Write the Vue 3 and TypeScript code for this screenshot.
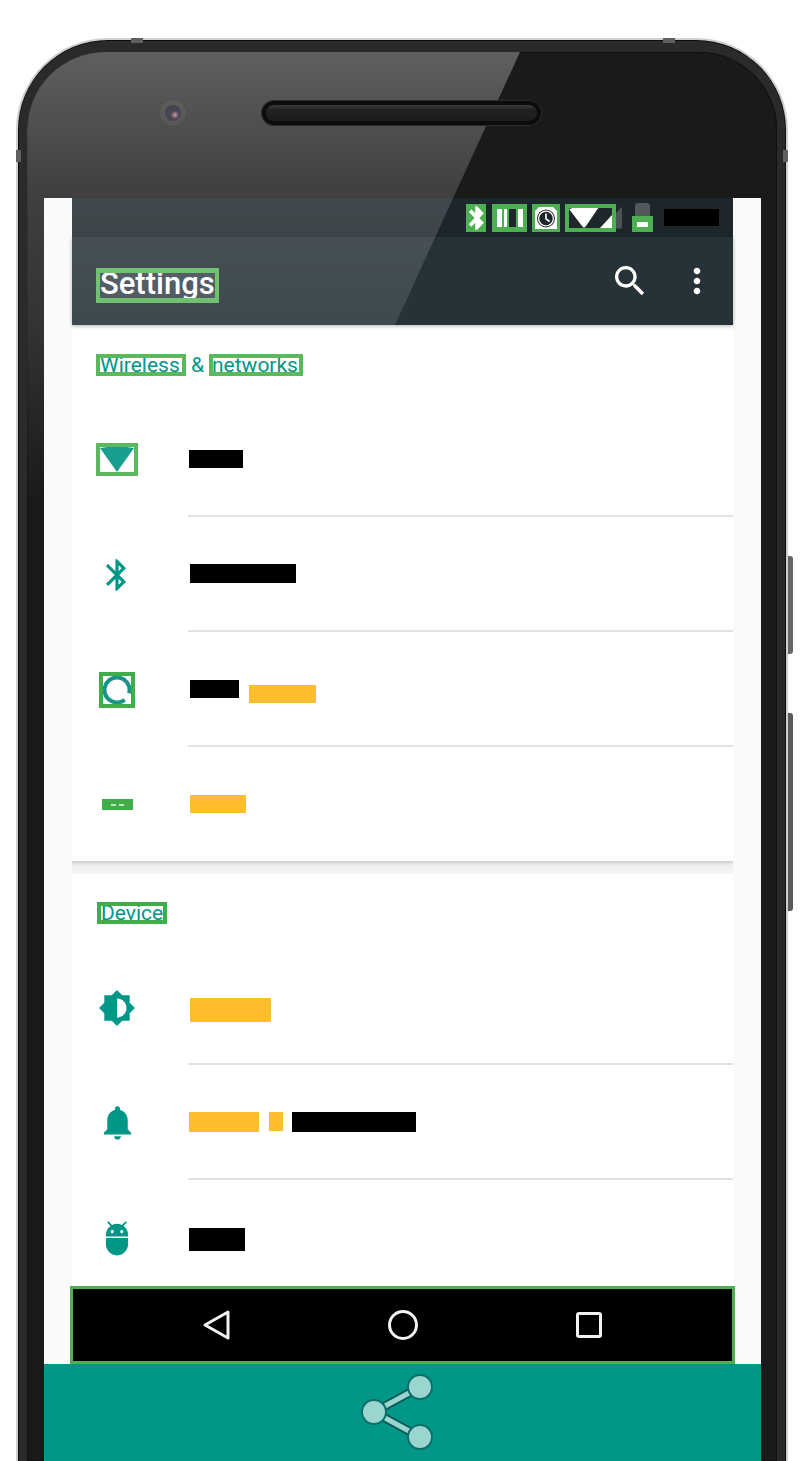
<script setup lang="ts">
interface Block {
  width: number
  height: number
  color: 'black' | 'yellow'
  gap?: number
  shift?: number
}

interface Row {
  id: string
  icon: string
  blocks: Block[]
}

const paths: Record<string, string> = {
  bluetooth: 'M17.71 7.71L12 2h-1v7.59L6.41 5 5 6.41 10.59 12 5 17.59 6.41 19 11 14.41V22h1l5.71-5.71-4.3-4.29 4.3-4.29zM13 5.83l1.88 1.88L13 9.59V5.83zm1.88 10.46L13 18.17v-3.76l1.88 1.88z',
  brightness: 'M20 15.31L23.31 12 20 8.69V4h-4.69L12 .69 8.69 4H4v4.69L.69 12 4 15.31V20h4.69L12 23.31 15.31 20H20v-4.69zM12 18V6c3.31 0 6 2.69 6 6s-2.69 6-6 6z',
  bell: 'M12 22c1.1 0 2-.9 2-2h-4c0 1.1.89 2 2 2zm6-6v-5c0-3.07-1.64-5.64-4.5-6.32V4c0-.83-.67-1.5-1.5-1.5s-1.5.67-1.5 1.5v.68C7.63 5.36 6 7.92 6 11v5l-2 2v1h16v-1l-2-2z',
  adb: 'M5 16c0 3.87 3.13 7 7 7s7-3.13 7-7v-4H5v4zM16.12 4.37l2.1-2.1-.82-.83-2.3 2.31C14.16 3.28 13.12 3 12 3s-2.16.28-3.09.75L6.6 1.44l-.82.83 2.1 2.1C6.14 5.64 5 7.68 5 10v1h14v-1c0-2.32-1.14-4.36-2.88-5.63zM9 9c-.55 0-1-.45-1-1s.45-1 1-1 1 .45 1 1-.45 1-1 1zm6 0c-.55 0-1-.45-1-1s.45-1 1-1 1 .45 1 1-.45 1-1 1z'
}

const searchPath = 'M15.5 14h-.79l-.28-.27C15.41 12.59 16 11.11 16 9.5 16 5.91 13.09 3 9.5 3S3 5.91 3 9.5 5.91 16 9.5 16c1.61 0 3.09-.59 4.23-1.57l.27.28v.79l5 4.99L20.49 19l-4.99-5zm-6 0C7.01 14 5 11.99 5 9.5S7.01 5 9.5 5 14 7.01 14 9.5 11.99 14 9.5 14z'
const morePath = 'M12 8c1.1 0 2-.9 2-2s-.9-2-2-2-2 .9-2 2 .9 2 2 2zm0 2c-1.1 0-2 .9-2 2s.9 2 2 2 2-.9 2-2-.9-2-2-2zm0 6c-1.1 0-2 .9-2 2s.9 2 2 2 2-.9 2-2-.9-2-2-2z'

const wirelessRows: Row[] = [
  { id: 'wifi', icon: 'wifi', blocks: [{ width: 54, height: 18, color: 'black' }] },
  { id: 'bt', icon: 'bluetooth', blocks: [{ width: 106, height: 19, color: 'black', gap: 1 }] },
  {
    id: 'data',
    icon: 'data',
    blocks: [
      { width: 49, height: 18, color: 'black', gap: 1, shift: 1 },
      { width: 67, height: 18, color: 'yellow', gap: 10, shift: 11 }
    ]
  },
  { id: 'more', icon: 'more', blocks: [{ width: 56, height: 18, color: 'yellow', gap: 1, shift: -1 }] }
]

const deviceRows: Row[] = [
  { id: 'display', icon: 'brightness', blocks: [{ width: 81, height: 24, color: 'yellow', gap: 1, shift: 6 }] },
  {
    id: 'sound',
    icon: 'bell',
    blocks: [
      { width: 70, height: 20, color: 'yellow' },
      { width: 14, height: 19, color: 'yellow', gap: 10 },
      { width: 124, height: 20, color: 'black', gap: 9 }
    ]
  },
  { id: 'apps', icon: 'adb', blocks: [{ width: 56, height: 23, color: 'black', shift: 3 }] }
]

const blockStyle = (block: Block) => ({
  width: `${block.width}px`,
  height: `${block.height}px`,
  marginLeft: `${block.gap ?? 0}px`,
  marginTop: `${block.shift ?? 0}px`
})
</script>

<template>
  <div class="page">
    <div class="phone">
      <i class="band band-top-left"></i>
      <i class="band band-top-right"></i>
      <i class="band band-side-left"></i>
      <i class="band band-side-right"></i>
      <div class="rim">
        <div class="body">
          <div class="bezel">
            <div class="camera"><span class="lens"></span></div>
            <div class="speaker"></div>
          </div>

          <div class="screen">
            <div class="statusbar">
              <span class="st-box st-bt">
                <svg viewBox="4 1 15 22" width="15" height="24" preserveAspectRatio="none"><path :d="paths.bluetooth" fill="#fff" stroke="#fff" stroke-width="1.6" /></svg>
              </span>
              <span class="st-box st-vibrate">
                <i class="bar wide"></i><i class="bar thin"></i><i class="bar gap"></i><i class="bar wide"></i>
              </span>
              <span class="st-box st-alarm">
                <svg viewBox="0 0 22 22" width="22" height="22">
                  <rect width="22" height="22" fill="#fff" />
                  <path d="M0 4l4-4h-4zM22 4l-4-4h4z" fill="#4caf50" />
                  <circle cx="11" cy="11.5" r="9" fill="#1e272c" />
                  <circle cx="11" cy="11.5" r="7.4" fill="none" stroke="#fff" stroke-width="1.3" />
                  <path d="M11 6.5v5.4l3.6 2.6" fill="none" stroke="#fff" stroke-width="1.6" />
                </svg>
              </span>
              <span class="st-box st-signal">
                <svg viewBox="0 0 43 21" width="43" height="21">
                  <rect width="43" height="21" fill="#1e272c" />
                  <path d="M0 2q14-4 30-2L17 19q-2 3-4 0z" fill="#fff" />
                  <path d="M43 8v13H31z" fill="#fff" />
                </svg>
              </span>
              <i class="st-wedge"></i>
              <span class="st-lock">
                <i class="lock-top"></i>
                <i class="lock-box"><b></b></i>
              </span>
              <span class="st-clock"></span>
            </div>

            <div class="appbar">
              <span class="title-box"><span class="title">Settings</span></span>
              <div class="actions">
                <svg viewBox="0 0 24 24" width="40" height="40"><path :d="searchPath" fill="#fff" /></svg>
                <svg viewBox="0 0 24 24" width="40" height="40"><path :d="morePath" fill="#fff" /></svg>
              </div>
            </div>

            <div class="content">
              <section class="card first">
                <h2 class="section-title">
                  <span class="hl hl-wireless"><span>Wireless</span></span>
                  <span class="amp">&amp;</span>
                  <span class="hl hl-networks"><span>networks</span></span>
                </h2>
                <div v-for="row in wirelessRows" :key="row.id" class="row">
                  <div class="row-icon">
                    <span v-if="row.icon === 'wifi'" class="ic-box ic-wifi">
                      <svg viewBox="0 0 34 25" width="34" height="25"><path d="M0 1q17-3 34 0L17 25z" fill="#1a9e90" /></svg>
                    </span>
                    <span v-else-if="row.icon === 'data'" class="ic-box ic-data">
                      <svg viewBox="0 0 28 28" width="28" height="28">
                        <circle cx="14" cy="14" r="12.5" fill="none" stroke="#1a9388" stroke-width="4" stroke-dasharray="70 8.5" transform="rotate(52 14 14)" />
                      </svg>
                    </span>
                    <span v-else-if="row.icon === 'more'" class="ic-box ic-more"><i></i><i></i></span>
                    <svg v-else viewBox="0 0 24 24" width="38" height="38"><path :d="paths[row.icon]" fill="#009688" /></svg>
                  </div>
                  <div class="row-text">
                    <span v-for="(block, i) in row.blocks" :key="i" class="block" :class="block.color" :style="blockStyle(block)"></span>
                  </div>
                </div>
              </section>

              <div class="section-gap"></div>

              <section class="card">
                <h2 class="section-title second">
                  <span class="hl hl-device"><span>Device</span></span>
                </h2>
                <div v-for="row in deviceRows" :key="row.id" class="row">
                  <div class="row-icon">
                    <svg viewBox="0 0 24 24" :width="row.icon === 'bell' ? 41 : 38" :height="row.icon === 'bell' ? 41 : 38"><path :d="paths[row.icon]" fill="#009688" /></svg>
                  </div>
                  <div class="row-text">
                    <span v-for="(block, i) in row.blocks" :key="i" class="block" :class="block.color" :style="blockStyle(block)"></span>
                  </div>
                </div>
              </section>
            </div>

            <div class="navbar">
              <svg viewBox="0 0 30 32" width="30" height="32">
                <path d="M26 3L3 16l23 13z" fill="none" stroke="#f2f2f2" stroke-width="3" stroke-linejoin="round" />
              </svg>
              <svg viewBox="0 0 32 32" width="32" height="32">
                <circle cx="16" cy="16" r="13.5" fill="none" stroke="#f2f2f2" stroke-width="3" />
              </svg>
              <svg viewBox="0 0 30 30" width="30" height="30">
                <rect x="3.5" y="3.5" width="23" height="23" rx="1.5" fill="none" stroke="#f2f2f2" stroke-width="3" />
              </svg>
            </div>
          </div>

          <div class="share-bar">
            <svg viewBox="0 0 84 78" width="84" height="78">
              <path d="M64 14L18 39l46 25" fill="none" stroke="#075e58" stroke-width="9" />
              <path d="M64 14L18 39l46 25" fill="none" stroke="#9bd5cf" stroke-width="5" />
              <g fill="#9bd5cf" stroke="#0b6f67" stroke-width="2">
                <circle cx="64" cy="14" r="12" />
                <circle cx="18" cy="39" r="12" />
                <circle cx="64" cy="64" r="12" />
              </g>
            </svg>
          </div>

          <div class="glare"></div>
        </div>
      </div>
      <i class="side-btn power"></i>
      <i class="side-btn volume"></i>
    </div>
  </div>
</template>

<style>
html,
body {
  margin: 0;
  background: #fff;
}
</style>

<style scoped>
.page {
  height: 1461px;
  padding: 38px 12px 0 16px;
  box-sizing: border-box;
  overflow: hidden;
  background: #fff;
  font-family: Roboto, "Liberation Sans", sans-serif;
}

.phone {
  position: relative;
  height: 1423px;
  box-sizing: border-box;
  padding: 1px 1px 0;
  border: 2px solid #cfcfcf;
  border-bottom: none;
  border-radius: 92px 92px 0 0;
  background: #0c0c0c;
}

.rim {
  height: 100%;
  box-sizing: border-box;
  border: solid #2a2a2a;
  border-width: 11px 8px 0 8px;
  border-radius: 88px 88px 0 0;
}

.body {
  position: relative;
  height: 100%;
  display: flex;
  flex-direction: column;
  overflow: hidden;
  background: #1a1a1a;
  border-radius: 78px 78px 0 0;
  box-shadow: inset 0 0 0 1px #111;
}

.band {
  position: absolute;
  background: #5f5f5f;
}

.band-top-left {
  left: 113px;
  top: -2px;
  width: 12px;
  height: 5px;
}

.band-top-right {
  right: 111px;
  top: -2px;
  width: 12px;
  height: 5px;
}

.band-side-left {
  left: -2px;
  top: 110px;
  width: 5px;
  height: 12px;
}

.band-side-right {
  right: -2px;
  top: 110px;
  width: 5px;
  height: 12px;
}

.side-btn {
  position: absolute;
  right: -7px;
  width: 5px;
  background: #666;
  border-radius: 0 3px 3px 0;
}

.power {
  top: 516px;
  height: 98px;
}

.volume {
  top: 673px;
  height: 198px;
  background: #5a5a5a;
}

.bezel {
  position: relative;
  z-index: 3;
  height: 146px;
  flex: none;
  display: flex;
  align-items: center;
  gap: 75px;
  padding: 0 0 24px 132px;
  box-sizing: border-box;
}

.camera {
  width: 28px;
  height: 28px;
  display: flex;
  align-items: center;
  justify-content: center;
  border-radius: 50%;
  background: rgba(255, 255, 255, 0.05);
  box-shadow: inset 0 0 0 1px rgba(0, 0, 0, 0.12);
}

.lens {
  width: 16px;
  height: 16px;
  border-radius: 50%;
  background: radial-gradient(circle at 62% 62%, #b9868a 0 7%, #4a4856 28%, #3e3c48 100%);
}

.speaker {
  width: 279px;
  height: 24px;
  box-sizing: border-box;
  border: 4px solid #0c0c0c;
  border-radius: 12px;
  background: linear-gradient(#3a3a3a, #222 30%, #1c1c1c);
  box-shadow: 0 0 0 1px #2b2b2b;
}

.screen {
  flex: none;
  height: 1166px;
  margin: 0 16px 0 17px;
  padding: 0 28px;
  display: flex;
  flex-direction: column;
  background: #fafafa;
}

.statusbar {
  height: 39px;
  flex: none;
  display: flex;
  align-items: center;
  padding-right: 14px;
  background: #1d262b;
}

.st-box {
  display: flex;
  align-items: center;
  justify-content: center;
  height: 28px;
  box-sizing: border-box;
  border: 3px solid #4caf50;
  background: #4caf50;
  overflow: hidden;
}

.st-bt {
  width: 20px;
  margin-left: auto;
  margin-top: 1px;
  border-width: 2px;
}

.st-vibrate {
  width: 35px;
  margin-left: 6px;
  gap: 2px;
  border-width: 5px 4px;
}

.bar {
  height: 100%;
  background: #fff;
}

.bar.wide {
  width: 5px;
}

.bar.thin {
  width: 3px;
}

.bar.gap {
  width: 7px;
  background: #1d262b;
}

.st-alarm {
  width: 28px;
  margin-left: 5px;
}

.st-signal {
  width: 51px;
  margin-left: 5px;
  border-width: 4px;
}

.st-wedge {
  width: 6px;
  height: 22px;
  background: #4d5254;
  clip-path: polygon(100% 0, 100% 100%, 0 100%, 0 30%);
}

.st-lock {
  width: 21px;
  height: 29px;
  margin: 0 11px 0 10px;
  display: flex;
  flex-direction: column;
  align-items: center;
}

.lock-top {
  width: 15px;
  height: 13px;
  background: #52585b;
  border-radius: 3px 3px 0 0;
}

.lock-box {
  width: 21px;
  height: 16px;
  display: flex;
  align-items: center;
  justify-content: center;
  background: #4caf50;
}

.lock-box b {
  width: 11px;
  height: 5px;
  background: #fff;
}

.st-clock {
  width: 55px;
  height: 17px;
  background: #000;
}

.appbar {
  height: 88px;
  flex: none;
  position: relative;
  z-index: 1;
  display: flex;
  align-items: center;
  justify-content: space-between;
  padding: 0 16px 0 24px;
  background: #263238;
  box-shadow: 0 1px 4px rgba(0, 0, 0, 0.3);
}

.title-box {
  width: 123px;
  height: 35px;
  box-sizing: border-box;
  margin-top: 9px;
  display: block;
  border: solid #5cb85c;
  border-width: 5px 4px;
  overflow: hidden;
  background: #3a4650;
}

.title {
  display: block;
  margin: -7px 0 0 0;
  color: #fff;
  font-size: 31px;
  font-weight: 500;
  line-height: 36px;
  white-space: nowrap;
}

.actions {
  display: flex;
  align-items: center;
  gap: 27px;
}

.actions svg {
  flex: none;
}

.content {
  flex: 1;
  min-height: 0;
  overflow: hidden;
  background: #fff;
}

.card {
  background: #fff;
}

.card.first {
  height: 536px;
}

.section-title {
  height: 77px;
  box-sizing: border-box;
  margin: 0;
  padding: 29px 0 0 24px;
  display: flex;
  align-items: flex-start;
  color: #009688;
  font-size: 21px;
  font-weight: 400;
  line-height: 22px;
}

.section-title.second {
  height: 76px;
  padding: 28px 0 0 25px;
}

.hl {
  height: 22px;
  box-sizing: border-box;
  display: block;
  border: 4px solid #5cb85c;
  overflow: hidden;
  background: #fff;
  white-space: nowrap;
}

.hl span {
  display: block;
  margin: -4px 0 0 0;
}

.hl-wireless {
  width: 90px;
}

.hl-networks {
  width: 94px;
}

.hl-networks span {
  margin-left: -1px;
}

.hl-device {
  width: 70px;
  border-color: #3fae49;
}

.amp {
  width: 23px;
  text-align: center;
}

.row {
  height: 115px;
  display: flex;
  align-items: center;
  padding-left: 24px;
  position: relative;
}

.row-icon {
  width: 42px;
  height: 42px;
  flex: none;
  display: flex;
  align-items: center;
  justify-content: center;
}

.row-text {
  flex: 1;
  align-self: stretch;
  display: flex;
  align-items: center;
  box-sizing: border-box;
  border-bottom: 2px solid #e2e2e2;
  margin-left: 50px;
  padding-left: 1px;
}

.card.first .row:last-child .row-text,
.card:last-child .row:last-child .row-text {
  border-bottom: none;
}

.block {
  display: block;
  flex: none;
}

.block.black {
  background: #000;
}

.block.yellow {
  background: #fdbd2c;
}

.ic-box {
  display: flex;
  align-items: center;
  justify-content: center;
  box-sizing: border-box;
  overflow: hidden;
}

.ic-wifi {
  width: 42px;
  height: 33px;
  border: 4px solid #5cb85c;
  background: #fff;
}

.ic-data {
  width: 36px;
  height: 36px;
  border: 4px solid #3fae49;
  background: #fff;
}

.ic-more {
  width: 31px;
  height: 11px;
  gap: 3px;
  background: #3fae49;
}

.ic-more i {
  width: 5px;
  height: 2px;
  background: #bfe6c2;
}

.section-gap {
  height: 13px;
  background: linear-gradient(#cfcfcf, #eeeeee 35%, #f5f5f5);
}

.navbar {
  height: 78px;
  flex: none;
  margin: 0 -2px;
  box-sizing: border-box;
  border: 3px solid #4caf50;
  display: grid;
  grid-template-columns: repeat(3, 186px);
  justify-content: center;
  justify-items: center;
  align-items: center;
  background: #000;
}

.share-bar {
  flex: 1;
  margin: 0 16px 0 17px;
  display: flex;
  justify-content: center;
  padding: 9px 10px 0 0;
  box-sizing: border-box;
  background: #009688;
}

.glare {
  position: absolute;
  z-index: 2;
  left: 0;
  top: 0;
  width: 520px;
  height: 448px;
  background: linear-gradient(rgba(255, 255, 255, 0.3), rgba(255, 255, 255, 0.16) 146px, rgba(255, 255, 255, 0.11) 273px, rgba(255, 255, 255, 0));
  clip-path: polygon(0 0, 493px 0, 368px 273px, 17px 273px, 17px 100%, 0 100%);
  pointer-events: none;
}
</style>
